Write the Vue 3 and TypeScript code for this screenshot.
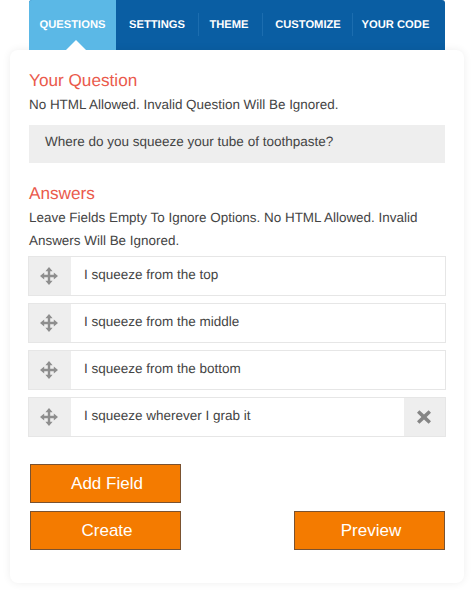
<script setup lang="ts">
interface Answer { text: string; removable: boolean }
const tabs: string[] = ['QUESTIONS', 'SETTINGS', 'THEME', 'CUSTOMIZE', 'YOUR CODE']
const answers: Answer[] = [
  { text: 'I squeeze from the top', removable: false },
  { text: 'I squeeze from the middle', removable: false },
  { text: 'I squeeze from the bottom', removable: false },
  { text: 'I squeeze wherever I grab it', removable: true },
]
</script>

<template>
  <div class="page">
    <nav class="tabs">
      <div
        v-for="(tab, i) in tabs"
        :key="tab"
        class="tab"
        :class="{ active: i === 0, divided: i > 1 }"
      >{{ tab }}</div>
    </nav>
    <main class="card">
      <h2 class="title">Your Question</h2>
      <p class="hint">No HTML Allowed. Invalid Question Will Be Ignored.</p>
      <div class="question">Where do you squeeze your tube of toothpaste?</div>

      <h2 class="title answers-title">Answers</h2>
      <p class="hint">Leave Fields Empty To Ignore Options. No HTML Allowed. Invalid Answers Will Be Ignored.</p>
      <div class="rows">
        <div v-for="a in answers" :key="a.text" class="row">
          <div class="handle">
            <svg width="18" height="18" viewBox="0 0 18 18" aria-hidden="true">
              <path
                fill="#8e8e8e"
                d="M9 0 12.6 4.2H10.2V7.8H13.8V5.4L18 9 13.8 12.6V10.2H10.2V13.8H12.6L9 18 5.4 13.8H7.8V10.2H4.2V12.6L0 9 4.2 5.4V7.8H7.8V4.2H5.4Z"
              />
            </svg>
          </div>
          <div class="answer">{{ a.text }}</div>
          <div v-if="a.removable" class="remove">
            <svg width="16" height="16" viewBox="0 0 16 16" aria-hidden="true">
              <path
                fill="#858585"
                d="M3.4 1.3 8 5.5 12.6 1.3 15 3.7 10.6 8 15 12.3 12.6 14.7 8 10.5 3.4 14.7 1 12.3 5.4 8 1 3.7Z"
              />
            </svg>
          </div>
        </div>
      </div>
      <div class="actions">
        <button class="btn" type="button">Add Field</button>
        <div class="action-row">
          <button class="btn" type="button">Create</button>
          <button class="btn" type="button">Preview</button>
        </div>
      </div>
    </main>
  </div>
</template>

<style>
html, body { margin: 0; background: #fff; }
</style>

<style scoped>
.page {
  width: 474px;
  height: 593px;
  padding: 0 10px;
  box-sizing: border-box;
  font-family: "Liberation Sans", Arial, sans-serif;
  color: #444;
  overflow: hidden;
  text-rendering: geometricPrecision;
}
.tabs {
  display: grid;
  grid-template-columns: 87px 82px 64px 90px 93px;
  height: 50px;
  margin: 0 19px;
  background: #0a5ea3;
  border-top-left-radius: 3px;
  border-top-right-radius: 3px;
}
.tab {
  position: relative;
  padding-top: 18px;
  box-sizing: border-box;
  text-align: center;
  color: #fff;
  font-size: 11.2px;
  line-height: 14px;
  font-weight: 700;
}
.tab:nth-child(3) {
  padding-right: 2px;
}
.tab:nth-child(4) {
  padding-left: 2px;
}
.tab:last-child {
  padding-right: 6px;
}
.tab.divided::before {
  content: "";
  position: absolute;
  left: 0;
  top: 13px;
  height: 23px;
  width: 1px;
  background: #1c6daf;
}
.tab.active {
  background: #5bb8e6;
  border-top-left-radius: 3px;
}
.tab.active::after {
  content: "";
  position: absolute;
  left: 37px;
  bottom: 0;
  border-left: 10px solid transparent;
  border-right: 10px solid transparent;
  border-bottom: 10px solid #fff;
}
.card {
  height: 533px;
  box-sizing: border-box;
  padding: 19px 19px 0;
  background: #fff;
  border-radius: 8px;
  box-shadow: 0 0 8px rgba(0, 0, 0, 0.07);
}
.title {
  margin: 0;
  font-size: 17.2px;
  line-height: 22px;
  font-weight: 400;
  color: #ea5a4c;
}
.answers-title {
  margin-top: 19px;
}
.hint {
  margin: 2px 0 0;
  font-size: 13.45px;
  line-height: 23px;
  color: #444;
}
.question {
  height: 38px;
  margin-top: 9px;
  padding-left: 16px;
  background: #eee;
  font-size: 13.5px;
  line-height: 34px;
}
.rows {
  display: flex;
  flex-direction: column;
  gap: 7px;
  margin: 4px -1px 0;
}
.row {
  display: flex;
  height: 40px;
  box-sizing: border-box;
  border: 1px solid #e6e6e6;
  background: #fff;
}
.handle {
  display: flex;
  align-items: center;
  justify-content: center;
  width: 42px;
  padding-right: 3px;
  box-sizing: border-box;
  background: #eee;
}
.answer {
  flex: 1;
  padding-left: 13px;
  font-size: 13.5px;
  line-height: 36px;
}
.remove {
  display: flex;
  align-items: center;
  justify-content: center;
  width: 41px;
  padding-right: 2px;
  box-sizing: border-box;
  background: #eee;
}
.actions {
  display: flex;
  flex-direction: column;
  gap: 8px;
  margin-top: 27px;
}
.action-row {
  display: flex;
  justify-content: space-between;
  padding: 0 0 0 1px;
}
.actions > .btn {
  margin-left: 1px;
}
.btn {
  width: 151px;
  height: 39px;
  padding: 1px 0 0 3px;
  border: 1px solid #7a5230;
  border-radius: 0;
  background: #f47b00;
  color: #fff;
  font-family: "Liberation Sans", Arial, sans-serif;
  font-size: 17px;
}
</style>
